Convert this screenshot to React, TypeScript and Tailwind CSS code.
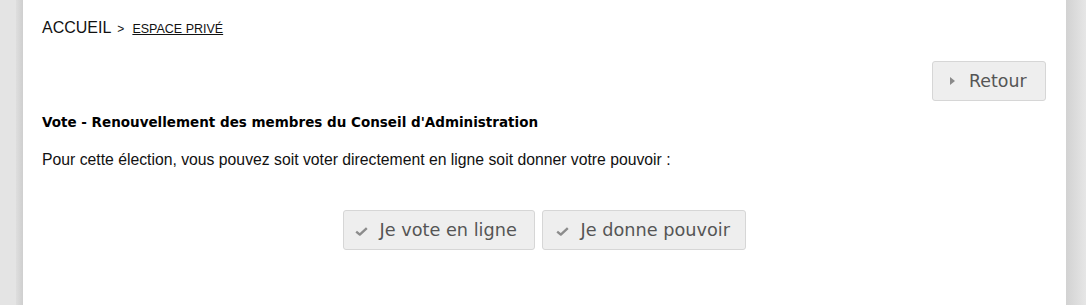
import React from 'react';

const Check = () => (
  <svg width="13" height="9" viewBox="0 0 13 9" className="mt-[3px] shrink-0">
    <path d="M1.2 4.6 L4.8 7.6 L11.8 1.2" fill="none" stroke="#8c8c8c" strokeWidth="2.4" strokeLinejoin="round" />
  </svg>
);

const Caret = () => (
  <svg width="5" height="8" viewBox="0 0 5 8" className="shrink-0">
    <path d="M0 0 L5 4 L0 8 Z" fill="#8a8a8a" />
  </svg>
);

const App = () => {
  return (
    <div className="flex h-[305px] w-full bg-[#e4e4e4]">
      <div className="w-[16px] shrink-0" />
      <div className="w-[7px] shrink-0 bg-gradient-to-r from-[#dedede] to-[#cfcfcf]" />
      <div className="flex w-[1043px] shrink-0 flex-col bg-white pl-[19px] pr-[20px] pt-[16px]">
        {/* Breadcrumb */}
        <div className="flex items-baseline font-['Liberation_Sans',Arial,sans-serif] text-[#111]">
          <span className="text-[16px]">ACCUEIL</span>
          <span className="ml-[6px] text-[12px]">&gt;</span>
          <a className="ml-[8px] text-[12.5px] underline">ESPACE PRIVÉ</a>
        </div>

        {/* Back button */}
        <div className="mt-[21px] flex justify-end">
          <button className="flex h-[40px] w-[114px] items-center gap-[14px] rounded-[3px] border border-[#d6d6d6] bg-[#eeeeee] pl-[17px] font-['DejaVu_Sans',Verdana,sans-serif] text-[17.4px] text-[#555]">
            <Caret />
            <span>Retour</span>
          </button>
        </div>

        {/* Content */}
        <h2 className="mt-[11px] font-['DejaVu_Sans',Verdana,sans-serif] text-[13.5px] font-bold leading-[20px] text-black">
          Vote - Renouvellement des membres du Conseil d'Administration
        </h2>
        <p className="mt-[18px] font-['Liberation_Sans',Arial,sans-serif] text-[15.75px] leading-[20px] text-[#111]">
          Pour cette élection, vous pouvez soit voter directement en ligne soit donner votre pouvoir :
        </p>

        <div className="mt-[40px] flex justify-center gap-[7px]">
          <button className="flex h-[40px] w-[192px] items-center gap-[12px] rounded-[3px] border border-[#d6d6d6] bg-[#eeeeee] pl-[11px] font-['DejaVu_Sans',Verdana,sans-serif] text-[17.7px] text-[#555]">
            <Check />
            <span>Je vote en ligne</span>
          </button>
          <button className="flex h-[40px] w-[204px] items-center gap-[12px] rounded-[3px] border border-[#d6d6d6] bg-[#eeeeee] pl-[13px] font-['DejaVu_Sans',Verdana,sans-serif] text-[17.7px] text-[#555]">
            <Check />
            <span>Je donne pouvoir</span>
          </button>
        </div>
      </div>
      <div className="flex-1 bg-gradient-to-r from-[#d2d2d2] to-[#e6e6e6]" />
    </div>
  );
};

export default App;
